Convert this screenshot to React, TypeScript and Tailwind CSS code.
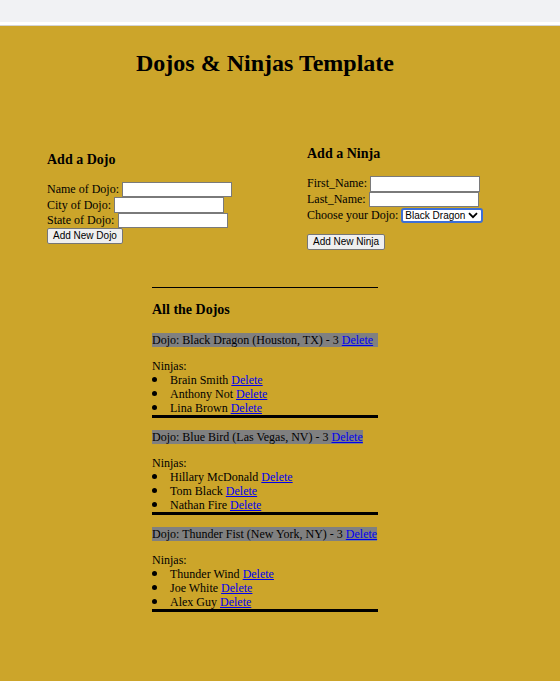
import { useState } from "react";

interface Dojo {
  name: string;
  city: string;
  state: string;
  ninjas: string[];
}

const dojos: Dojo[] = [
  { name: "Black Dragon", city: "Houston", state: "TX", ninjas: ["Brain Smith", "Anthony Not", "Lina Brown"] },
  { name: "Blue Bird", city: "Las Vegas", state: "NV", ninjas: ["Hillary McDonald", "Tom Black", "Nathan Fire"] },
  { name: "Thunder Fist", city: "New York", state: "NY", ninjas: ["Thunder Wind", "Joe White", "Alex Guy"] },
];

const inputCls = "h-[15.5px] w-[110px] ml-[3px] bg-white border border-[#7a7a7a] outline-none";
const buttonCls =
  "font-['Liberation_Sans',Arial,sans-serif] text-[10px] leading-[11.5px] px-[5px] py-[1px] border border-[#767676] rounded-[2px] bg-[#efefef] text-black";

const App = () => {
  const [dojoPick, setDojoPick] = useState("Black Dragon");

  return (
    <div className="min-h-screen flex flex-col bg-[#cca52a] font-['Liberation_Serif','Times_New_Roman',serif] text-[12px] leading-[normal] text-black">
      {/* browser chrome strip */}
      <div className="h-[22px] bg-[#f1f2f4]" />
      <div className="h-[4px] bg-white border-b border-[#d4d4d4]" />

      <main className="flex-1">
        <h1 className="mt-[24px] ml-[136px] text-[24px] font-bold">Dojos &amp; Ninjas Template</h1>

        {/* Forms */}
        <div className="mt-[69px] flex items-center">
          <div className="ml-[47px] w-[260px] shrink-0">
            <h3 className="text-[14px] font-bold mb-[14px]">Add a Dojo</h3>
            <div className="flex items-center h-[15.5px]">
              <span>Name of Dojo:</span>
              <input className={inputCls} />
            </div>
            <div className="flex items-center h-[15.5px]">
              <span>City of Dojo:</span>
              <input className={inputCls} />
            </div>
            <div className="flex items-center h-[15.5px]">
              <span>State of Dojo:</span>
              <input className={`${inputCls} ml-[4px]`} />
            </div>
            <button className={buttonCls}>Add New Dojo</button>
          </div>

          <div>
            <h3 className="text-[14px] font-bold mb-[14px]">Add a Ninja</h3>
            <div className="flex items-center h-[15.5px]">
              <span>First_Name:</span>
              <input className={inputCls} />
            </div>
            <div className="flex items-center h-[15.5px]">
              <span>Last_Name:</span>
              <input className={inputCls} />
            </div>
            <div className="flex items-center h-[16px]">
              <span>Choose your Dojo:</span>
              <div className="relative ml-[3px] flex items-center">
                <select
                  value={dojoPick}
                  onChange={(e) => setDojoPick(e.target.value)}
                  className="appearance-none h-[15px] w-[82px] pl-[2px] border-2 border-[#3d6fd6] rounded-[3px] bg-white font-['Liberation_Sans',Arial,sans-serif] text-[10px] leading-[11px] text-black outline-none"
                >
                  {dojos.map((d) => (
                    <option key={d.name}>{d.name}</option>
                  ))}
                </select>
                <svg
                  className="absolute right-[5px] pointer-events-none"
                  width="10"
                  height="7"
                  viewBox="0 0 10 7"
                >
                  <path d="M1 1.2 L5 5.2 L9 1.2" fill="none" stroke="black" strokeWidth="1.8" />
                </svg>
              </div>
            </div>
            <button className={`${buttonCls} mt-[11px]`}>Add New Ninja</button>
          </div>
        </div>

        {/* Dojo list */}
        <div className="mt-[37px] ml-[152px] w-[226px] pb-[40px]">
          <hr className="border-t border-black" />
          <h3 className="mt-[14px] mb-[15px] text-[14px] font-bold">All the Dojos</h3>

          {dojos.map((d, i) => (
            <div key={d.name} className={i === 0 ? "" : "mt-[12px]"}>
              <div
                className={`block w-fit bg-[#808080] leading-[14px] whitespace-nowrap ${i === 0 ? "pr-[5px]" : ""}`}
              >
                Dojo: {d.name} ({d.city}, {d.state}) - {d.ninjas.length}{" "}
                <a href="#" className="text-[#0000ee] underline">
                  Delete
                </a>
              </div>
              <div className="mt-[12px] leading-[14px]">Ninjas:</div>
              <ul className="leading-[14px] border-b-[3px] border-black">
                {d.ninjas.map((n) => (
                  <li key={n} className="flex items-center">
                    <span className="w-[5px] h-[5px] rounded-full bg-black mr-[13px] shrink-0" />
                    <span>
                      {n}{" "}
                      <a href="#" className="text-[#0000ee] underline">
                        Delete
                      </a>
                    </span>
                  </li>
                ))}
              </ul>
            </div>
          ))}
        </div>
      </main>
    </div>
  );
};

export default App;
